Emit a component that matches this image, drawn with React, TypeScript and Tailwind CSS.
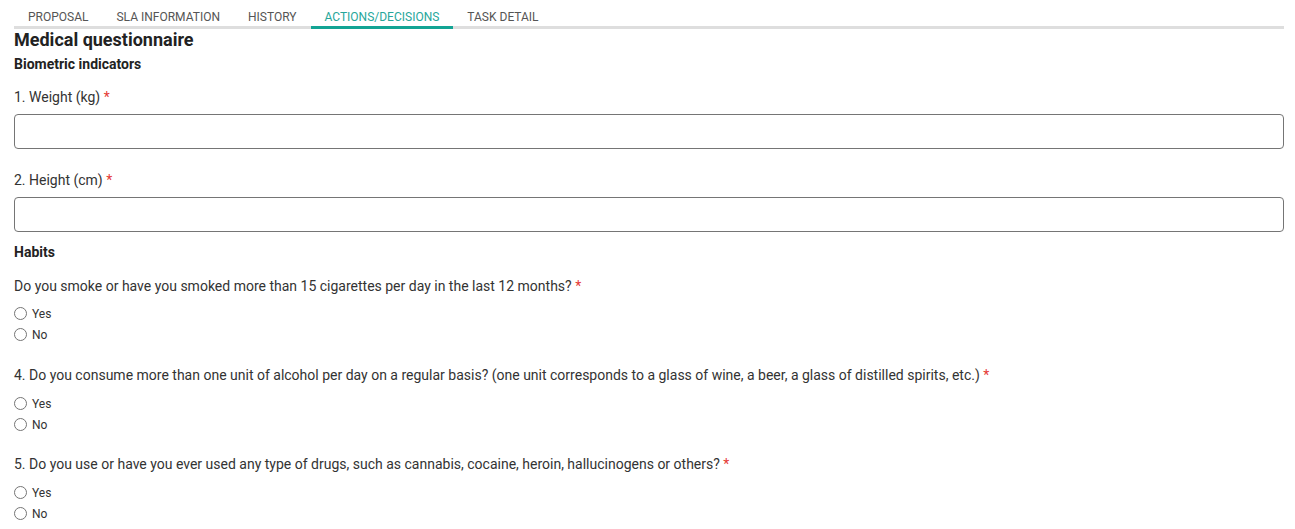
import React from 'react';

const tabs = ['PROPOSAL', 'SLA INFORMATION', 'HISTORY', 'ACTIONS/DECISIONS', 'TASK DETAIL'];

const Req = () => <span className="text-[#e53935]"> *</span>;

const Radio: React.FC<{ label: string }> = ({ label }) => (
    <label className="flex items-center h-[21px] text-[12px] text-[#333]">
        <span className="w-[13px] h-[13px] rounded-full border border-[#757575] bg-white" />
        <span className="ml-[5px] leading-none">{label}</span>
    </label>
);

const YesNo: React.FC<{ top: string }> = ({ top }) => (
    <div className={top}>
        <Radio label="Yes" />
        <Radio label="No" />
    </div>
);

export default function App() {
    return (
        <div className="w-[1295px] h-[529px] overflow-hidden bg-white pl-[14px] pr-[11px]" style={{ fontFamily: 'Roboto, "Liberation Sans", sans-serif' }}>
            <div className="flex border-b-[3px] border-[#dedede] mt-[7px]">
                {tabs.map((t, i) => (
                    <div
                        key={t}
                        className={`px-[14px] h-[19px] text-[12px] leading-[20px] -mb-[3px] box-content border-b-[3px] ${i === 3 ? 'text-[#26a69a] border-[#12a494]' : 'text-[#555] border-transparent'}`}
                    >
                        {t}
                    </div>
                ))}
            </div>
            <h1 className="text-[18px] font-bold text-[#222] leading-[22px]">Medical questionnaire</h1>
            <h2 className="text-[14px] font-bold text-[#222] leading-[17px] mt-[5px]">Biometric indicators</h2>

            <p className="text-[14px] text-[#333] leading-[17px] mt-[16px]">1. Weight (kg)<Req /></p>
            <input className="block w-full h-[35px] mt-[8px] border border-[#757575] rounded-[4px] outline-none" />

            <p className="text-[14px] text-[#333] leading-[17px] mt-[23px]">2. Height (cm)<Req /></p>
            <input className="block w-full h-[35px] mt-[8px] border border-[#757575] rounded-[4px] outline-none" />

            <h2 className="text-[14px] font-bold text-[#222] leading-[17px] mt-[12px]">Habits</h2>

            <p className="text-[14px] text-[#333] leading-[17px] mt-[17px]">Do you smoke or have you smoked more than 15 cigarettes per day in the last 12 months?<Req /></p>
            <YesNo top="mt-[8px]" />

            <p className="text-[14px] text-[#333] leading-[17px] mt-[22px]">4. Do you consume more than one unit of alcohol per day on a regular basis? (one unit corresponds to a glass of wine, a beer, a glass of distilled spirits, etc.)<Req /></p>
            <YesNo top="mt-[9px]" />

            <p className="text-[14px] text-[#333] leading-[17px] mt-[21px]">5. Do you use or have you ever used any type of drugs, such as cannabis, cocaine, heroin, hallucinogens or others?<Req /></p>
            <YesNo top="mt-[9px]" />
        </div>
    );
}
